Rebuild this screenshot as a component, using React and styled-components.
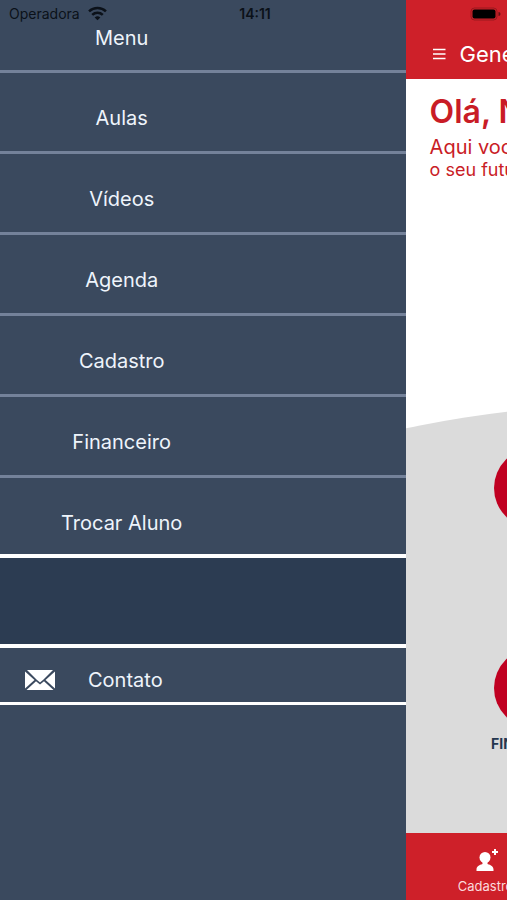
import styled, { createGlobalStyle } from "styled-components";

const GlobalStyle = createGlobalStyle`
  * {
    box-sizing: border-box;
  }
  body {
    margin: 0;
    font-family: Inter, "Liberation Sans", sans-serif;
    background-color: #3a495e;
  }
  h1, h2, p, ul {
    margin: 0;
    padding: 0;
    font-weight: 400;
  }
`;

const Page = styled.div`
  position: relative;
  display: flex;
  min-height: 100vh;
  overflow: hidden;
`;

const StatusBar = styled.header`
  position: absolute;
  top: 0;
  left: 0;
  right: 0;
  display: grid;
  grid-template-columns: 1fr auto 1fr;
  align-items: center;
  height: 27px;
  padding: 0 6px 0 9px;
  font-size: 14px;
  color: #0b1119;
`;
const Carrier = styled.span`
  display: flex;
  align-items: center;
  gap: 8px;
`;
const Clock = styled.span`
  font-weight: 600;
`;
const Battery = styled.svg`
  justify-self: end;
`;

const Drawer = styled.aside`
  flex: 0 0 80%;
  background-color: #3a495e;
  color: #eef4fb;
`;
const MenuTitle = styled.h2`
  padding: 24px 40% 18px 0;
  border-bottom: 3px solid #74829a;
  font-size: 20px;
  line-height: 28px;
  text-align: center;
`;
const MenuList = styled.ul`
  list-style: none;
`;
const MenuItem = styled.li`
  border-bottom: 3px solid #74829a;

  &:last-child {
    border-bottom: 4px solid #fff;
  }
`;
const MenuLink = styled.a`
  display: block;
  padding: 31px 40% 19px 0;
  font-size: 20px;
  line-height: 28px;
  text-align: center;
  text-decoration: none;
  color: inherit;

  ${MenuItem}:last-child & {
    padding-bottom: 17px;
  }
`;
const Divider = styled.div`
  height: 90px;
  background-color: #2c3c52;
  border-bottom: 4px solid #fff;
`;
const ContactLink = styled.a`
  display: flex;
  align-items: center;
  gap: 32px;
  height: 57px;
  padding: 10px 24px 0;
  border-bottom: 3px solid #fff;
  font-size: 20px;
  line-height: 28px;
  text-decoration: none;
  color: inherit;
`;

const Screen = styled.main`
  flex: 0 0 100%;
  display: flex;
  flex-direction: column;
  overflow: hidden;
  background-color: #fff;
`;
const TopBar = styled.div`
  display: flex;
  align-items: center;
  gap: 13px;
  height: 79px;
  padding: 28px 26px 0;
  background-color: #ce2029;
  color: #fff;
`;
const MenuButton = styled.button`
  display: flex;
  padding: 0;
  border: none;
  background: none;
  color: inherit;
  cursor: pointer;
`;
const TopTitle = styled.h1`
  font-size: 22px;
  line-height: 26px;
`;
const Welcome = styled.section`
  height: 324px;
  padding: 12px 24px 0;
  color: #c91c26;
`;
const Greeting = styled.h2`
  font-size: 32px;
  font-weight: 600;
  line-height: 42px;
`;
const Lead = styled.p`
  font-size: ${({ $small }) => ($small ? "18px" : "20px")};
  line-height: ${({ $small }) => ($small ? "18px" : "28px")};
`;
const Panel = styled.section`
  flex: 1;
  margin: 0 -50%;
  padding: 45px 50% 0;
  border-radius: 50% 50% 0 0 / 190px 190px 0 0;
  background-color: #dbdbdb;
`;
const Shortcuts = styled.div`
  display: grid;
  grid-template-columns: 1fr 1fr;
  grid-template-rows: 200px auto;
  justify-items: center;
  padding: 0 4px;
`;
const Shortcut = styled.a`
  display: flex;
  flex-direction: column;
  align-items: center;
  gap: 6px;
  font-size: 14px;
  font-weight: 700;
  line-height: 20px;
  text-decoration: none;
  color: #24364f;
`;
const Circle = styled.span`
  width: 80px;
  height: 80px;
  border-radius: 50%;
  background-color: #c00021;
`;
const TabBar = styled.nav`
  display: flex;
  height: 67px;
  background-color: #ce2029;
`;
const Tab = styled.a`
  display: flex;
  flex-direction: column;
  align-items: center;
  gap: 4px;
  width: 160px;
  padding-top: 15px;
  font-size: 13px;
  line-height: 20px;
  text-decoration: none;
  color: #fbd9dc;
`;

const items = ["Aulas", "Vídeos", "Agenda", "Cadastro", "Financeiro", "Trocar Aluno"];

const App = () => {
  return (
    <>
      <GlobalStyle />
      <Page>
        <Drawer>
          <MenuTitle>Menu</MenuTitle>
          <MenuList>
            {items.map((item) => (
              <MenuItem key={item}>
                <MenuLink href="#">{item}</MenuLink>
              </MenuItem>
            ))}
          </MenuList>
          <Divider />
          <ContactLink href="#">
            <svg width="32" height="20" viewBox="0 0 32 20" fill="#fff">
              <path d="M3 0h26L19.500 9.500 16 12.500 12.500 9.500z" />
              <path d="M1 1.500 10.500 10 1 18.500z" />
              <path d="M31 1.500 21.500 10 31 18.500z" />
              <path d="M2.500 20 12 11.200l4 3.300 4-3.300L29.500 20z" />
            </svg>
            Contato
          </ContactLink>
        </Drawer>

        <Screen>
          <TopBar>
            <MenuButton type="button" aria-label="Menu">
              <svg width="15" height="12" viewBox="0 0 15 12" stroke="currentColor" strokeWidth="1.500">
                <path d="M1 1.500h12.500M1 6h12.500M1 10.500h12.500" />
              </svg>
            </MenuButton>
            <TopTitle>Gene</TopTitle>
          </TopBar>
          <Welcome>
            <Greeting>Olá, N</Greeting>
            <Lead>Aqui você</Lead>
            <Lead $small>o seu futuro</Lead>
          </Welcome>
          <Panel>
            <Shortcuts>
              <Shortcut href="#" aria-label="Aulas">
                <Circle />
              </Shortcut>
              <span />
              <Shortcut href="#">
                <Circle />
                FINANCEIRO
              </Shortcut>
            </Shortcuts>
          </Panel>
          <TabBar>
            <Tab href="#">
              <svg width="24" height="24" viewBox="0 0 24 24" fill="#fff">
                <circle cx="11" cy="9.500" r="5.500" />
                <path d="M2.500 23v-1.500c0-3 2.500-4.500 6-5.500v-3h5v3c3.500 1 6 2.500 6 5.500V23z" />
                <path d="M20 1h2v2h2v2h-2v2h-2V5h-2V3h2z" />
              </svg>
              Cadastro
            </Tab>
          </TabBar>
        </Screen>

        <StatusBar>
          <Carrier>
            Operadora
            <svg width="19" height="15" viewBox="0 0 18 14" fill="none" stroke="currentColor" strokeWidth="2.400">
              <path d="M1 5a11.500 11.500 0 0 1 16 0" />
              <path d="M4 8.300a7.200 7.200 0 0 1 10 0" />
              <path d="M9 13.500 6.300 10.800a3.900 3.900 0 0 1 5.400 0z" fill="currentColor" stroke="none" />
            </svg>
          </Carrier>
          <Clock>14:11</Clock>
          <Battery width="31" height="14" viewBox="0 0 31 14">
            <rect x="1" y="1" width="26" height="12" rx="3.500" fill="none" stroke="#000" strokeOpacity="0.250" />
            <rect x="2.500" y="2.500" width="23" height="9" rx="2" fill="#000" />
            <path d="M28.500 5v4a2 2 0 0 0 0-4z" fill="#000" fillOpacity="0.500" />
          </Battery>
        </StatusBar>
      </Page>
    </>
  );
};

export default App;
